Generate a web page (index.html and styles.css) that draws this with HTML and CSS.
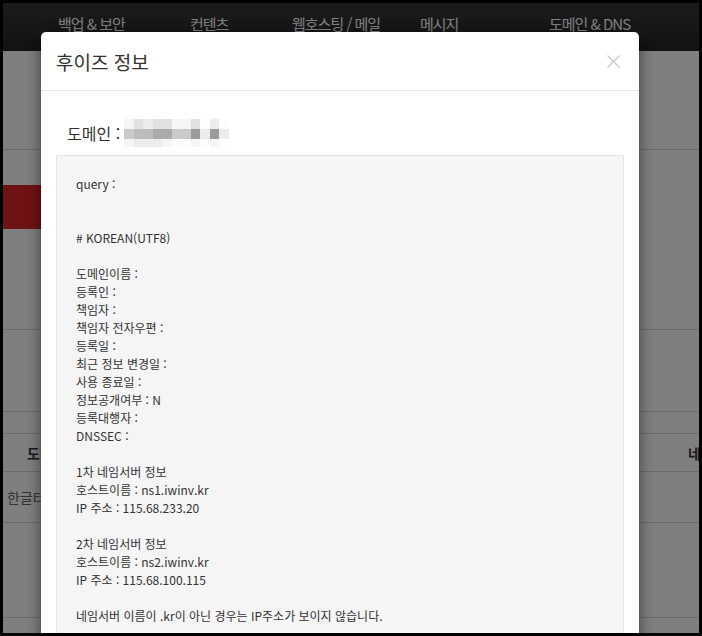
FILE: index.html
```html
<!DOCTYPE html>
<html lang="ko">
<head>
  <meta charset="UTF-8">
  <title>후이즈 정보</title>
  <link rel="stylesheet" href="styles.css">
</head>
<body>
  <div class="screen">

    <!-- page under the dialog -->
    <div class="topnav">
      <span class="nav-item">백업 &amp; 보안</span>
      <span class="nav-item">컨텐츠</span>
      <span class="nav-item">웹호스팅 / 메일</span>
      <span class="nav-item">메시지</span>
      <span class="nav-item">도메인 &amp; DNS</span>
    </div>

    <div class="intro"></div>

    <div class="tabs">
      <div class="tab-active"></div>
    </div>

    <div class="search"></div>

    <div class="domain-table">
      <div class="tbl-row tbl-head">
        <div class="th-first">도메인</div>
        <div></div>
        <div class="th-last">네임서버</div>
      </div>
      <div class="tbl-row tbl-body">
        <div class="td-first">한글터</div>
        <div></div>
        <div></div>
      </div>
      <div class="tbl-row tbl-empty"></div>
    </div>

    <!-- Dim Backdrop -->
    <div class="backdrop"></div>

    <!-- Whois Modal -->
    <div class="modal">
      <div class="modal-header">
        <h4 class="modal-title">후이즈 정보</h4>
        <svg class="modal-close" width="13" height="13" viewBox="0 0 13 13">
          <path d="M0.5 0.5 L12.5 12.5 M12.5 0.5 L0.5 12.5" stroke="#c9c9c9" stroke-width="1.4" fill="none"/>
        </svg>
      </div>
      <div class="modal-body">
        <div class="domain-line">
          <span>도메인 :</span>
          <div class="blurred">
            <i class="p1"></i><i class="p3"></i><i class="p2"></i><i class="p3"></i><i class="p3"></i><i class="p1"></i><i class="p1"></i><i class="p3"></i><i class="p0"></i><i class="p2"></i><i class="p0"></i>
            <i class="p4"></i><i class="p5"></i><i class="p5"></i><i class="p6"></i><i class="p6"></i><i class="p4"></i><i class="p4"></i><i class="p7"></i><i class="p2"></i><i class="p7"></i><i class="p2"></i>
            <i class="p1"></i><i class="p2"></i><i class="p2"></i><i class="p2"></i><i class="p1"></i><i class="p0"></i><i class="p0"></i><i class="p1"></i><i class="p0"></i><i class="p1"></i><i class="p0"></i>
          </div>
        </div>
        <div class="whois">query :


# KOREAN(UTF8)

도메인이름 :
등록인 :
책임자 :
책임자 전자우편 :
등록일 :
최근 정보 변경일 :
사용 종료일 :
정보공개여부 : N
등록대행자 :
DNSSEC :

1차 네임서버 정보
호스트이름 : ns1.iwinv.kr
IP 주소 : 115.68.233.20

2차 네임서버 정보
호스트이름 : ns2.iwinv.kr
IP 주소 : 115.68.100.115

네임서버 이름이 .kr이 아닌 경우는 IP주소가 보이지 않습니다.

</div>
      </div>
    </div>

  </div>
</body>
</html>
```

FILE: styles.css
```css
/* RESET & BASE */
* {
  margin: 0;
  padding: 0;
  box-sizing: border-box;
}
body {
  background: #000;
  font-family: "Noto Sans CJK KR", "Noto Sans", sans-serif;
  color: #333;
}
.screen {
  position: relative;
  margin: 3px;
  height: 630px;
  overflow: hidden;
  background: #fff;
  white-space: nowrap;
}

/* BACKGROUND PAGE */
.topnav {
  height: 48px;
  display: flex;
  padding: 10px 0 0 55px;
  background: linear-gradient(#373737, #242424);
}
.nav-item {
  color: #fff;
  font-size: 15px;
  line-height: 22px;
  letter-spacing: -1px;
}
.nav-item:nth-child(1) { width: 132px; }
.nav-item:nth-child(2) { width: 102px; }
.nav-item:nth-child(3) { width: 128px; }
.nav-item:nth-child(4) { width: 129px; }

.intro {
  height: 99px;
  border-bottom: 1px solid #d6d6d6;
}
.tabs {
  padding: 35px 0 100px;
  border-bottom: 1px solid #d6d6d6;
}
.tab-active {
  width: 160px;
  height: 44px;
  background: #dc2428;
}
.search {
  height: 82px;
  border-bottom: 1px solid #d6d6d6;
}
.domain-table {
  margin-top: 21px;
  border-top: 1px solid #d6d6d6;
  font-size: 14px;
}
.tbl-row {
  display: grid;
  grid-template-columns: 220px 1fr 15px;
  align-items: center;
  border-bottom: 1px solid #d6d6d6;
}
.tbl-head { height: 38px; font-weight: bold; }
.tbl-body { height: 51px; color: #666; }
.tbl-empty { height: 95px; }
.th-first { padding-left: 24px; }
.th-last { padding-left: 4px; }
.td-first { padding-left: 4px; }

/* OVERLAY */
.backdrop {
  position: absolute;
  top: 0;
  left: 0;
  right: 0;
  bottom: 0;
  background: rgba(0, 0, 0, 0.5);
}

/* MODAL */
.modal {
  position: absolute;
  top: 29px;
  left: 38px;
  width: 598px;
  background: #fff;
  border-radius: 5px;
  box-shadow: 0 5px 15px rgba(0, 0, 0, 0.5);
}
.modal-header {
  display: flex;
  justify-content: space-between;
  align-items: center;
  padding: 16px 15px 15px;
  border-bottom: 1px solid #e5e5e5;
}
.modal-title {
  font-size: 19px;
  line-height: 27px;
  font-weight: normal;
  color: #333;
}
.modal-close {
  margin-right: 4px;
}
.modal-body {
  padding: 15px;
}
.domain-line {
  display: flex;
  align-items: center;
  height: 30px;
  margin: 12px 0 7px;
  padding-left: 11px;
  font-size: 16px;
}
.blurred {
  display: grid;
  grid-template-columns: repeat(11, 9.5px);
  grid-template-rows: 10px 10px 8px;
  margin-left: 4px;
}
.blurred i { display: block; }
.p0 { background: #fdfdfd; }
.p1 { background: #f5f5f5; }
.p2 { background: #ececec; }
.p3 { background: #e1e1e1; }
.p4 { background: #cacaca; }
.p5 { background: #bcbcbc; }
.p6 { background: #ababab; }
.p7 { background: #9b9b9b; }

.whois {
  padding: 19px;
  border: 1px solid #e3e3e3;
  background: #f5f5f5;
  font-size: 12px;
  line-height: 18px;
  color: #333;
  white-space: pre-line;
}
```
